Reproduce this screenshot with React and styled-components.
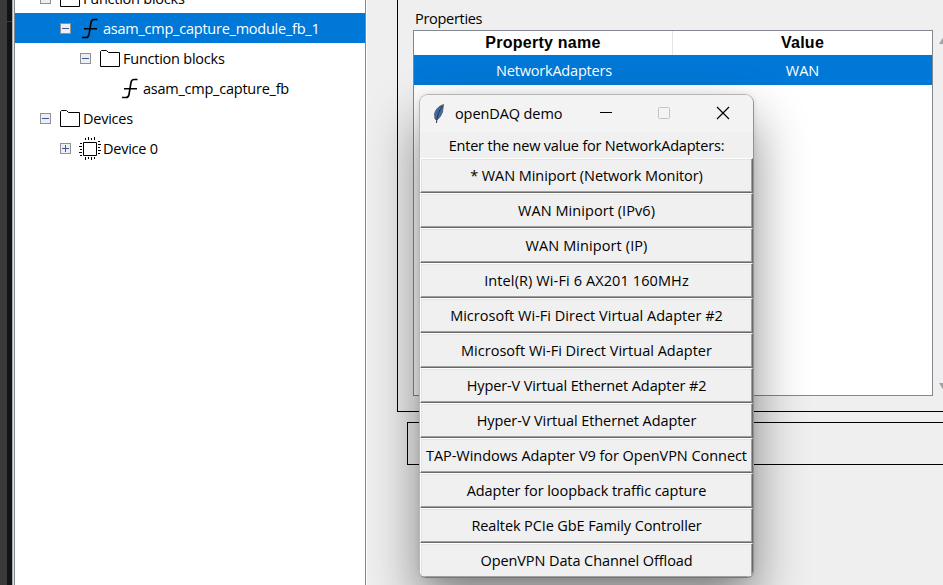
import React from 'react';
import styled, { createGlobalStyle } from 'styled-components';

const Global = createGlobalStyle`
  * { box-sizing: border-box; }
  body { margin: 0; overflow: hidden; background: #efefef; }
`;
const Desktop = styled.div`
  width: 943px; height: 585px; display: flex; overflow: hidden; position: relative;
  background: #efefef; color: #000;
  font-family: "Open Sans", "Noto Sans", sans-serif; font-size: 14.5px;
`;
const Edge = styled.div`
  width: 14px; flex: none; display: flex; background: linear-gradient(90deg, #a9a9a9 13px, #e3e3e3 13px);
`;
const EdgeOuter = styled.div`width: 7px; background: #3a3a3a;`;
const EdgeInner = styled.div`
  width: 5px; background: #0f131a; padding-top: 21px;
  &::before { content: ""; display: block; height: 1px; background: #3a3a3a; }
`;
const Tree = styled.div`
  width: 352px; flex: none; background: #fff; border: solid #828790; border-width: 0 1px;
  box-shadow: 1px 0 #fff;
`;
const TreeRow = styled.div`
  height: 30px; display: flex; align-items: center; gap: 2px;
  padding-left: ${p => p.$depth * 20 + 25}px;
  background: ${p => (p.$selected ? '#0078d7' : 'transparent')};
  color: ${p => (p.$selected ? '#fff' : '#000')};
  &:first-child { margin-top: -17px; }
`;
const Toggle = styled.svg`width: 11px; height: 11px; flex: none; margin-right: 6px;`;
const ToggleSpace = styled.span`width: 17px; flex: none;`;
const Icon = styled.svg`width: 23px; height: 24px; flex: none; overflow: visible; margin-left: -1px;`;
const Label = styled.span`
  white-space: pre; line-height: 20px; letter-spacing: ${p => p.$spacing ?? -0.2}px;
`;
const TreeLabel = styled(Label)`padding-top: 2px; letter-spacing: -0.24px;`;

const Expander = ({ open }) => (
  <Toggle viewBox="0 0 11 11">
    <rect x="0.5" y="0.5" width="10" height="10" fill="#eee" stroke="#919191" />
    <path d={open ? 'M2 5.5h7' : 'M2 5.5h7M5.5 2v7'} stroke="#3b58a4" />
  </Toggle>
);
const Folder = () => (
  <Icon viewBox="0 0 23 24"><path d="M2.500 20.500V5.500l1-1h5l2 2h11v14z" fill="#fff" stroke="#000" strokeLinejoin="round" /></Icon>
);
const Func = () => (
  <Icon viewBox="0 0 23 24">
    <path d="M19.500 3.500h-3.500q-2.500 0-3 3l-2 12q-.5 3-3 3H4M6 12.800h13" fill="none" stroke="#000" strokeWidth="1.600" />
  </Icon>
);
const Chip = () => (
  <Icon viewBox="0 0 23 24">
    <path d="M5.500 6.500h13v13h-13zM7.500 2v2M10.500 1v3M13.500 2v2M16.500 1v3M7.500 21v3M10.500 21v2M13.500 21v3M16.500 21v2M2 7.500h2M1 10.500h3M2 13.500h2M1 16.500h3M2 19.500h2M20 5.500h2M20 8.500h3M20 11.500h2M20 14.500h3M20 17.500h2" fill="none" stroke="#000" />
  </Icon>
);
const icons = { folder: Folder, func: Func, chip: Chip };

const Main = styled.div`flex: 1; min-width: 0; padding-left: 31px;`;
const Group = styled.div`
  height: 412px; border: solid #000; border-width: 0 0 1px 1px; padding: 9px 0 0 15px;
`;
const Heading = styled.div`height: 21px; padding-left: 2px;`;
const Split = styled.div`display: flex; gap: 6px;`;
const Table = styled.div`
  width: 520px; height: 366px; flex: none; border: 1px solid #828790; background: #fff;
`;
const Cells = styled.div`
  display: grid; grid-template-columns: 259px 259px; height: ${p => (p.$head ? 24 : 30)}px;
  align-items: center; text-align: center;
  ${p => p.$head
    ? 'font: bold 16px "Liberation Sans", sans-serif; line-height: 24px; letter-spacing: 0.25px;'
    : 'background: #0078d7; color: #fff; padding-top: 2px;'}
`;
const Cell = styled.div`
  ${p => p.$line && 'border-right: 1px solid #e5e5e5;'}
  ${p => p.$indent && 'padding-left: 21px;'}
`;
const Scroll = styled.div`
  width: 17px; flex: none; height: 366px; display: flex; flex-direction: column; justify-content: space-between; padding: 6px 0 5px;
`;
const Arrow = styled.svg`width: 14px; height: 8px;`;
const Status = styled.div`
  height: 43px; margin: 10px 0 0 10px; border: solid #000; border-width: 1px 0 1px 1px;
`;

const Dialog = styled.div`
  position: absolute; left: 419px; top: 94px; width: 335px; height: 484px;
  border: 1px solid #b5b5b5; border-right-color: #929292; border-bottom-color: #777;
  border-radius: 9px 9px 7px 7px; background: #f0f0f0; overflow: hidden;
`;
const Shadow = styled.div`
  position: absolute; left: 419px; top: 94px; width: 335px; height: 484px; border-radius: 9px;
  box-shadow: 0 26px 52px rgba(0,0,0,.46), 0 0 6px rgba(0,0,0,.08);
`;
const TitleBar = styled.div`
  height: 37px; display: flex; align-items: center; background: #f3f3f3;
`;
const Feather = styled.svg`width: 12px; height: 20px; margin: 0 10px 0 13px;`;
const Title = styled.div`width: 145px; white-space: nowrap;`;
const Controls = styled.svg`width: 132px; height: 16px; margin-top: -2px;`;
const Prompt = styled.div`height: 26px; line-height: 28px; text-align: center;`;
const Choice = styled.button`
  display: flex; align-items: center; justify-content: center; width: 333px; height: 35px; padding: 0;
  background: #f0f0f0; border: solid; border-width: 1px; border-color: #fff #696969 #696969 #fff;
  box-shadow: inset -1px -1px #a0a0a0, inset 1px 1px #e3e3e3;
  font: inherit; color: #000; white-space: nowrap;
`;

const rows = [
  { depth: 0, icon: 'folder', text: 'Function blocks', open: true },
  { depth: 1, icon: 'func', text: 'asam_cmp_capture_module_fb_1', open: true, selected: true },
  { depth: 2, icon: 'folder', text: 'Function blocks', open: true },
  { depth: 3, icon: 'func', text: 'asam_cmp_capture_fb' },
  { depth: 0, icon: 'folder', text: 'Devices', open: true },
  { depth: 1, icon: 'chip', text: 'Device 0', open: false },
];
const choices = [
  ['* WAN Miniport (Network Monitor)', -0.07],
  ['WAN Miniport (IPv6)', 0.06],
  ['WAN Miniport (IP)', 0.1],
  ['Intel(R) Wi-Fi 6 AX201 160MHz', 0.11],
  ['Microsoft Wi-Fi Direct Virtual Adapter #2', 0.02],
  ['Microsoft Wi-Fi Direct Virtual Adapter', 0.01],
  ['Hyper-V Virtual Ethernet Adapter #2', -0.11],
  ['Hyper-V Virtual Ethernet Adapter', -0.08],
  ['TAP-Windows Adapter V9 for OpenVPN Connect', -0.05],
  ['Adapter for loopback traffic capture', -0.06],
  ['Realtek PCIe GbE Family Controller', -0.11],
  ['OpenVPN Data Channel Offload', -0.09],
];

export default function App() {
  return (
    <Desktop>
      <Global />
      <Edge><EdgeOuter /><EdgeInner /></Edge>
      <Tree>
        {rows.map((r, i) => {
          const RowIcon = icons[r.icon];
          return (
            <TreeRow key={i} $depth={r.depth} $selected={r.selected}>
              {r.open === undefined ? <ToggleSpace /> : <Expander open={r.open} />}
              <RowIcon />
              <TreeLabel>{r.text}</TreeLabel>
            </TreeRow>
          );
        })}
      </Tree>
      <Main>
        <Group>
          <Heading><Label $spacing={-0.3}>Properties</Label></Heading>
          <Split>
            <Table>
              <Cells $head><Cell $line>Property name</Cell><Cell>Value</Cell></Cells>
              <Cells><Cell $indent><Label>NetworkAdapters</Label></Cell><Cell><Label $spacing={0}>WAN</Label></Cell></Cells>
            </Table>
            <Scroll>
              <Arrow viewBox="0 0 14 8"><path d="M0 8L5 0l5 8z" fill="#a3a3a3" /></Arrow>
              <Arrow viewBox="0 0 14 8"><path d="M0 0l5 8 5-8z" fill="#a3a3a3" /></Arrow>
            </Scroll>
          </Split>
        </Group>
        <Status />
      </Main>
      <Shadow />
      <Dialog>
        <TitleBar>
          <Feather viewBox="0 0 12 20">
            <path d="M10.500 0.500Q3 3 1.500 10L2 15l2 1q4-3 5.500-8z" fill="#3d6ba5" stroke="#4b5662" strokeWidth=".8" />
            <path d="M9.500 2Q4 9 3.500 19" fill="none" stroke="#333" />
          </Feather>
          <Title><Label $spacing={-0.1}>openDAQ demo</Label></Title>
          <Controls viewBox="0 0 132 16" fill="none">
            <path d="M0 7.500h12" stroke="#000" />
            <rect x="58.500" y="2.500" width="11" height="11" rx="1" stroke="#c4c4c4" />
            <path d="M117 2l12 12M129 2l-12 12" stroke="#000" strokeWidth="1.200" />
          </Controls>
        </TitleBar>
        <Prompt><Label>Enter the new value for NetworkAdapters:</Label></Prompt>
        {choices.map(([text, spacing]) => <Choice key={text}><Label $spacing={spacing}>{text}</Label></Choice>)}
      </Dialog>
    </Desktop>
  );
}
